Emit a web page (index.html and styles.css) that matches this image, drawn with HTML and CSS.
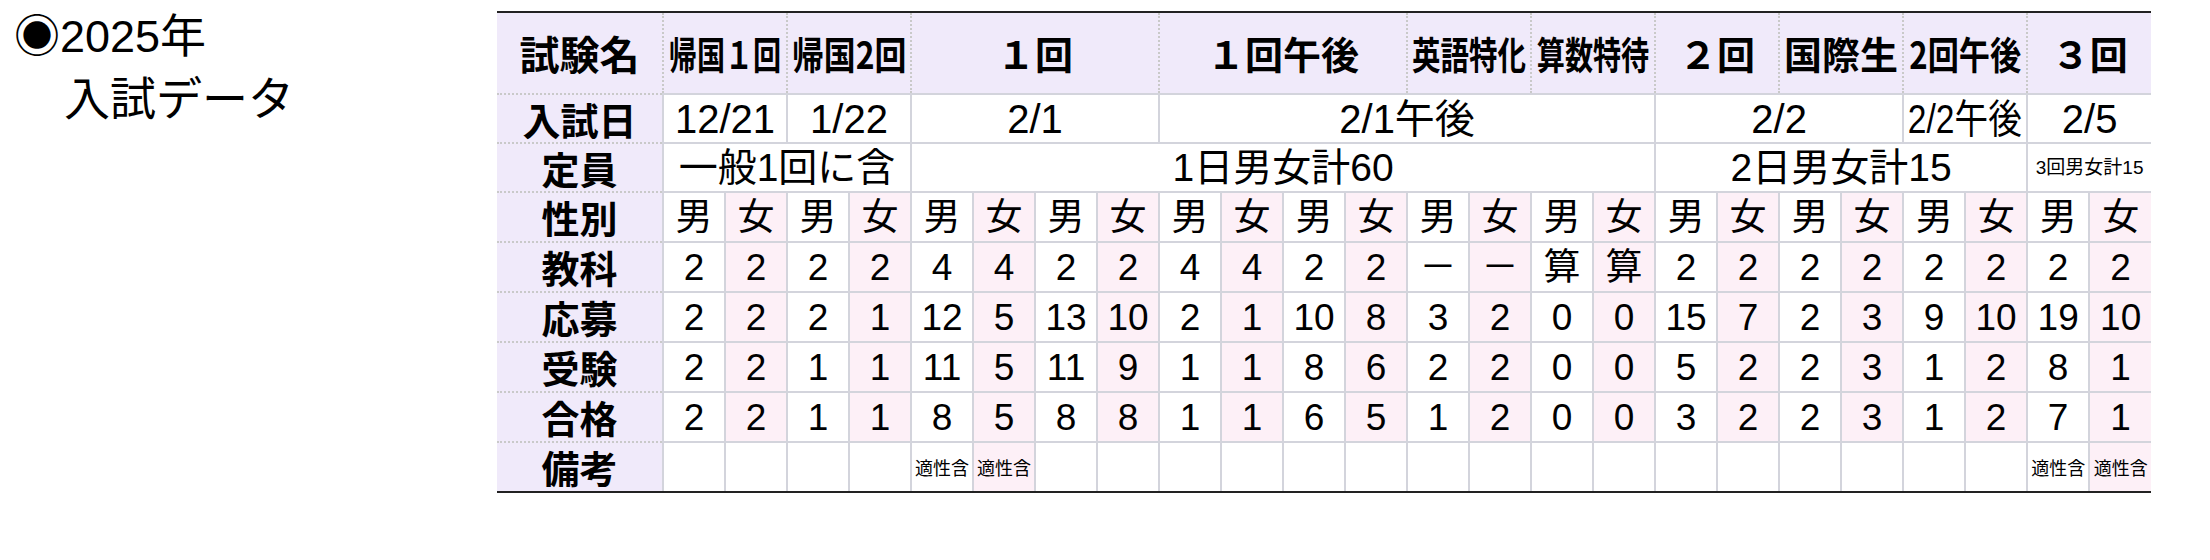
FILE: index.html
```html
<!DOCTYPE html>
<html lang="ja">
<head>
<meta charset="utf-8">
<title>2025年 入試データ</title>
<link rel="stylesheet" href="styles.css">
</head>
<body>
<div class="page">
  <div class="title">
    <div class="t1"><span class="mark">◉</span><span class="year">2025</span>年</div>
    <div class="t2">入試データ</div>
  </div>
  <table class="exam">
    <colgroup>
      <col class="c-lab">
      <col class="c-d"><col class="c-d"><col class="c-d"><col class="c-d"><col class="c-d"><col class="c-d">
      <col class="c-d"><col class="c-d"><col class="c-d"><col class="c-d"><col class="c-d"><col class="c-d">
      <col class="c-d"><col class="c-d"><col class="c-d"><col class="c-d"><col class="c-d"><col class="c-d">
      <col class="c-d"><col class="c-d"><col class="c-d"><col class="c-d"><col class="c-d"><col class="c-d">
    </colgroup>
    <tr class="r-head">
      <th class="lab">試験名</th>
      <th colspan="2"><span class="sx sx74">帰国１回</span></th>
      <th colspan="2"><span class="sx sx84">帰国2回</span></th>
      <th colspan="4">１回</th>
      <th colspan="4">１回午後</th>
      <th colspan="2"><span class="sx sx75">英語特化</span></th>
      <th colspan="2"><span class="sx sx74">算数特待</span></th>
      <th colspan="2">２回</th>
      <th colspan="2">国際生</th>
      <th colspan="2"><span class="sx sx82">2回午後</span></th>
      <th colspan="2">３回</th>
    </tr>
    <tr class="r-date">
      <th class="lab">入試日</th>
      <td colspan="2">12/21</td>
      <td colspan="2">1/22</td>
      <td colspan="4">2/1</td>
      <td colspan="8">2/1午後</td>
      <td colspan="4">2/2</td>
      <td colspan="2"><span class="sx sx84">2/2午後</span></td>
      <td colspan="2">2/5</td>
    </tr>
    <tr class="r-cap">
      <th class="lab">定員</th>
      <td colspan="4">一般1回に含</td>
      <td colspan="12">1日男女計60</td>
      <td colspan="6">2日男女計15</td>
      <td colspan="2" class="small">3回男女計15</td>
    </tr>
    <tr class="r-data">
      <th class="lab">性別</th>
      <td>男</td><td class="f">女</td><td>男</td><td class="f">女</td><td>男</td><td class="f">女</td>
      <td>男</td><td class="f">女</td><td>男</td><td class="f">女</td><td>男</td><td class="f">女</td>
      <td>男</td><td class="f">女</td><td>男</td><td class="f">女</td><td>男</td><td class="f">女</td>
      <td>男</td><td class="f">女</td><td>男</td><td class="f">女</td><td>男</td><td class="f">女</td>
    </tr>
    <tr class="r-data">
      <th class="lab">教科</th>
      <td>2</td><td class="f">2</td><td>2</td><td class="f">2</td><td>4</td><td class="f">4</td>
      <td>2</td><td class="f">2</td><td>4</td><td class="f">4</td><td>2</td><td class="f">2</td>
      <td>－</td><td class="f">－</td><td>算</td><td class="f">算</td><td>2</td><td class="f">2</td>
      <td>2</td><td class="f">2</td><td>2</td><td class="f">2</td><td>2</td><td class="f">2</td>
    </tr>
    <tr class="r-data">
      <th class="lab">応募</th>
      <td>2</td><td class="f">2</td><td>2</td><td class="f">1</td><td>12</td><td class="f">5</td>
      <td>13</td><td class="f">10</td><td>2</td><td class="f">1</td><td>10</td><td class="f">8</td>
      <td>3</td><td class="f">2</td><td>0</td><td class="f">0</td><td>15</td><td class="f">7</td>
      <td>2</td><td class="f">3</td><td>9</td><td class="f">10</td><td>19</td><td class="f">10</td>
    </tr>
    <tr class="r-data">
      <th class="lab">受験</th>
      <td>2</td><td class="f">2</td><td>1</td><td class="f">1</td><td>11</td><td class="f">5</td>
      <td>11</td><td class="f">9</td><td>1</td><td class="f">1</td><td>8</td><td class="f">6</td>
      <td>2</td><td class="f">2</td><td>0</td><td class="f">0</td><td>5</td><td class="f">2</td>
      <td>2</td><td class="f">3</td><td>1</td><td class="f">2</td><td>8</td><td class="f">1</td>
    </tr>
    <tr class="r-data">
      <th class="lab">合格</th>
      <td>2</td><td class="f">2</td><td>1</td><td class="f">1</td><td>8</td><td class="f">5</td>
      <td>8</td><td class="f">8</td><td>1</td><td class="f">1</td><td>6</td><td class="f">5</td>
      <td>1</td><td class="f">2</td><td>0</td><td class="f">0</td><td>3</td><td class="f">2</td>
      <td>2</td><td class="f">3</td><td>1</td><td class="f">2</td><td>7</td><td class="f">1</td>
    </tr>
    <tr class="r-note">
      <th class="lab">備考</th>
      <td></td><td></td><td></td><td></td><td>適性含</td><td class="f">適性含</td>
      <td></td><td></td><td></td><td></td><td></td><td></td>
      <td></td><td></td><td></td><td></td><td></td><td></td>
      <td></td><td></td><td></td><td></td><td>適性含</td><td class="f">適性含</td>
    </tr>
  </table>
</div>
</body>
</html>
```

FILE: styles.css
```css
html, body {
  margin: 0;
  padding: 0;
  background: #fff;
}

body {
  font-family: "Liberation Sans", "Noto Sans CJK JP", sans-serif;
  color: #000;
}

.page {
  display: flex;
  align-items: flex-start;
  padding: 11px 0 0 14px;
}

/* ---------- title ---------- */
.title {
  width: 483px;
  flex: none;
  font-family: "Liberation Sans", "Noto Sans CJK JP", sans-serif;
  font-size: 46px;
  line-height: 58px;
  margin-top: -8px;
}

.title .mark {
  font-family: "Noto Sans CJK JP", sans-serif;
  font-size: 46px;
}

.title .year {
  font-size: 45px;
}

.title .t1,
.title .t2 {
  white-space: nowrap;
}

.title .t2 {
  padding-left: 50px;
  font-family: "Noto Sans CJK JP", sans-serif;
}

/* ---------- table ---------- */
.exam {
  flex: none;
  border-collapse: collapse;
  table-layout: fixed;
  width: 1654px;
}

.c-lab { width: 166px; }
.c-d { width: 62px; }

.exam th,
.exam td {
  border: 2px solid #d3d4dc;
  padding: 0;
  text-align: center;
  vertical-align: middle;
  white-space: nowrap;
  overflow: visible;
  line-height: 1;
}

.exam tr > :first-child { border-left-style: none; }
.exam tr > :last-child { border-right-style: none; }

.exam .lab {
  background: #f0eafa;
  font-family: "Noto Sans CJK JP", sans-serif;
  font-weight: 700;
  font-size: 38px;
  border-top: 2px dotted #c9c9c9;
  border-bottom: 2px dotted #c9c9c9;
}

/* header row */
.r-head th {
  height: 80px;
  background: #f0eafa;
  font-family: "Noto Sans CJK JP", sans-serif;
  font-weight: 700;
  font-size: 38px;
  border-left: 2px dotted #c9c9c9;
  border-right: 2px dotted #c9c9c9;
  border-top: 2px solid #222;
}

.r-head th.lab {
  border-top: 2px solid #222;
  border-left-style: none;
  font-size: 40px;
}

.r-head th:last-child { border-right-style: none; }

/* date row */
.r-date th,
.r-date td {
  height: 47px;
}

.r-date td {
  font-size: 40px;
  font-family: "Liberation Sans", "Noto Sans CJK JP", sans-serif;
}

/* capacity row */
.r-cap th,
.r-cap td {
  height: 47px;
}

.r-cap td {
  font-size: 39px;
}

.r-cap td.small {
  font-size: 19px;
}

/* data rows */
.r-data th,
.r-data td,
.r-note th,
.r-note td {
  height: 48px;
}

.r-data td {
  font-size: 37px;
}

.r-data td.f {
  background: #fdf0f7;
}

.r-note td {
  font-family: "Noto Sans CJK JP", sans-serif;
  font-size: 18px;
}

.r-note td.f {
  background: #fdf0f7;
}

.r-note th,
.r-note td {
  border-bottom: 2px solid #222;
}

.r-note th.lab {
  border-bottom: 2px solid #222;
}

/* horizontally condensed labels */
.sx {
  display: inline-block;
  margin: 0 -24px;
}

.sx74 { transform: scaleX(0.74); }
.sx75 { transform: scaleX(0.75); }
.sx82 { transform: scaleX(0.82); }
.sx84 { transform: scaleX(0.84); }
```
